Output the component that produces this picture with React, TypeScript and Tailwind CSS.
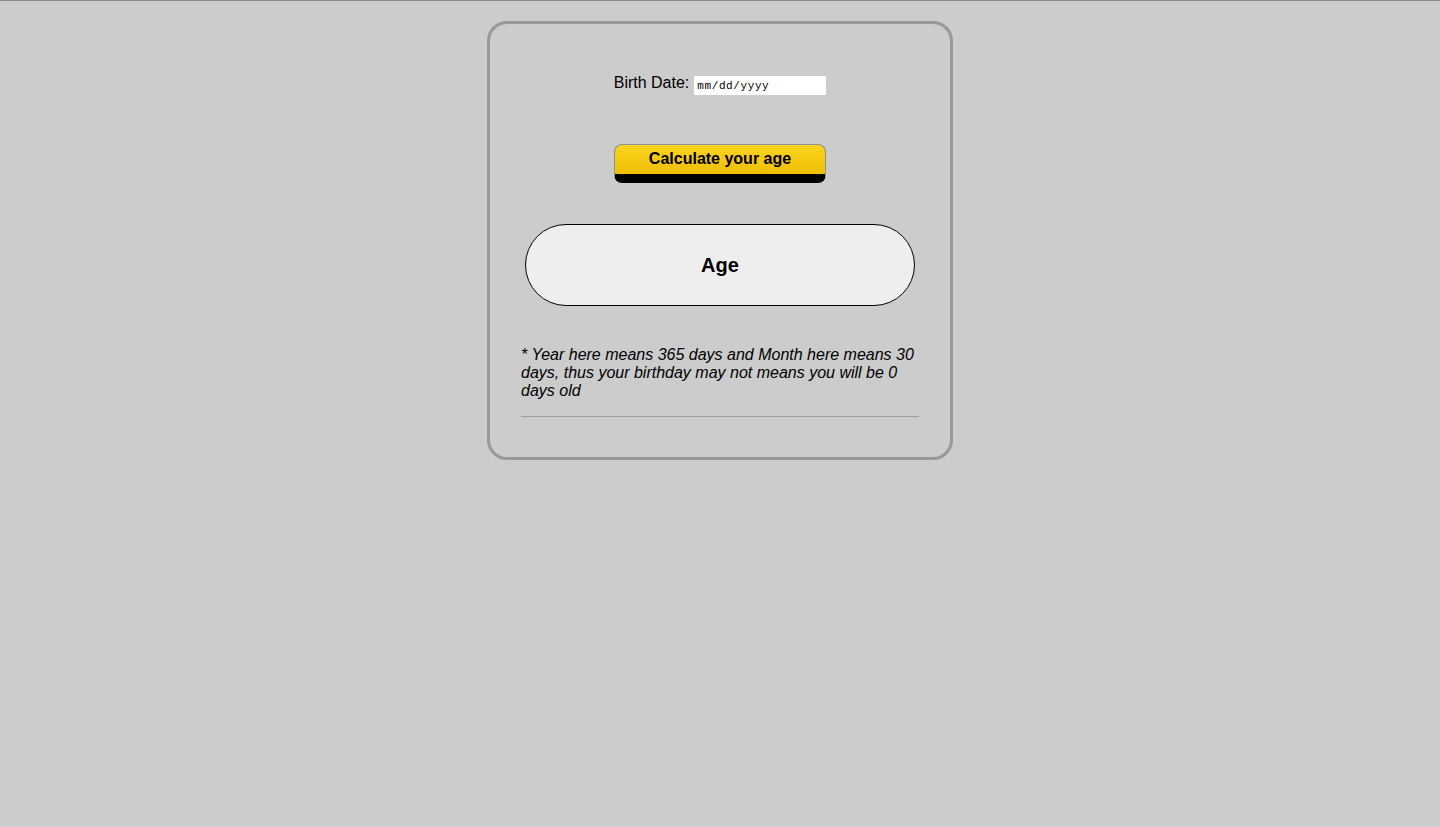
import React from "react";

const App = () => {
  return (
    <div className="min-h-[827px] bg-[#cccccc] border-t border-[#8a8a8a] font-['Liberation_Sans',Arial,sans-serif] text-black">
      <div className="mx-auto mt-[20px] w-[466px] rounded-[20px] border-[3px] border-[#999999] px-[31px] pt-[52px] pb-[40px]">
        <div className="flex h-[19px] items-center justify-center gap-[5px]">
          <label className="mb-[6px] text-[16px] leading-[19px]">Birth Date:</label>
          <input
            type="text"
            placeholder="mm/dd/yyyy"
            className="h-[19px] w-[132px] bg-white px-[3px] pt-[1px] font-['Liberation_Mono',monospace] text-[11px] tracking-[0.6px] outline-none placeholder:text-black"
          />
        </div>

        <div className="mt-[49px] flex justify-center">
          <button className="h-[39px] w-[212px] rounded-[8px] border border-[#8f8f8f] border-b-[9px] border-b-black bg-linear-to-b from-[#fdd41d] to-[#eebe02] pb-[3px] text-[16px] font-bold leading-[19px]">
            Calculate your age
          </button>
        </div>

        <div className="mx-auto mt-[41px] flex h-[82px] w-[390px] items-center justify-center rounded-full border border-black bg-[#eeeeee]">
          <span className="text-[20px] font-bold">Age</span>
        </div>

        <p className="mt-[40px] text-[16px] italic leading-[18px]">
          * Year here means 365 days and Month here means 30 days, thus your birthday may not means you will be 0 days old
        </p>

        <hr className="mt-[16px] border-t border-[#9e9e9e]" />
      </div>
    </div>
  );
};

export default App;
